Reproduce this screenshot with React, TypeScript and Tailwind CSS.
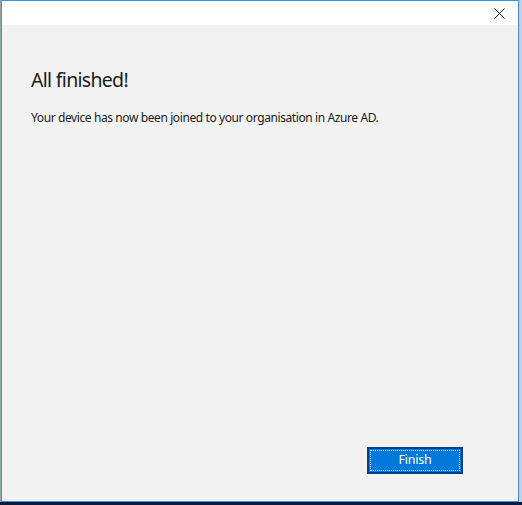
import React from "react";

export default function App() {
  return (
    <div className="w-[522px] h-[505px] bg-[#d9d9d9] relative overflow-hidden flex flex-col" style={{ fontFamily: '"Noto Sans", "Open Sans", sans-serif' }}>
      <div className="flex flex-1">
        <div className="w-px bg-[#9aa4b0]" />
        <div className="w-[518px] h-[502px] border border-[#3d8fe0] flex flex-col bg-[#f2f2f2]">
          <div className="h-6 bg-white flex justify-end items-start pr-[13px] pt-[7px]">
            <svg width="11" height="11" viewBox="0 0 11 11" className="block">
              <path d="M0.5 0.5 L10.5 10.5 M10.5 0.5 L0.5 10.5" stroke="#1a1a1a" strokeWidth="1" />
            </svg>
          </div>
          <div className="flex-1 flex flex-col pl-[29px] pr-[29px]">
            <h1 className="mt-[41px] text-[19.5px] leading-[28px] tracking-[-0.7px] text-[#1a1a1a] font-normal">All finished!</h1>
            <p className="mt-[16px] text-[12px] leading-[16px] tracking-[-0.4px] text-[#1a1a1a]">Your device has now been joined to your organisation in Azure AD.</p>
            <div className="flex-1" />
            <div className="flex justify-end mb-[27px] pr-[26px]">
              <button className="w-[96px] h-[27px] bg-[#0078d7] border-2 border-[#003e92] p-px flex">
                <span className="flex-1 border border-dotted border-[#dce8f5] flex items-center justify-center text-white text-[12.5px] tracking-[-0.2px] leading-none">Finish</span>
              </button>
            </div>
          </div>
        </div>
        <div className="flex-1 bg-[#c9ced6]" />
      </div>
      <div className="h-[3px] bg-[#0b1a3a]" />
    </div>
  );
}
